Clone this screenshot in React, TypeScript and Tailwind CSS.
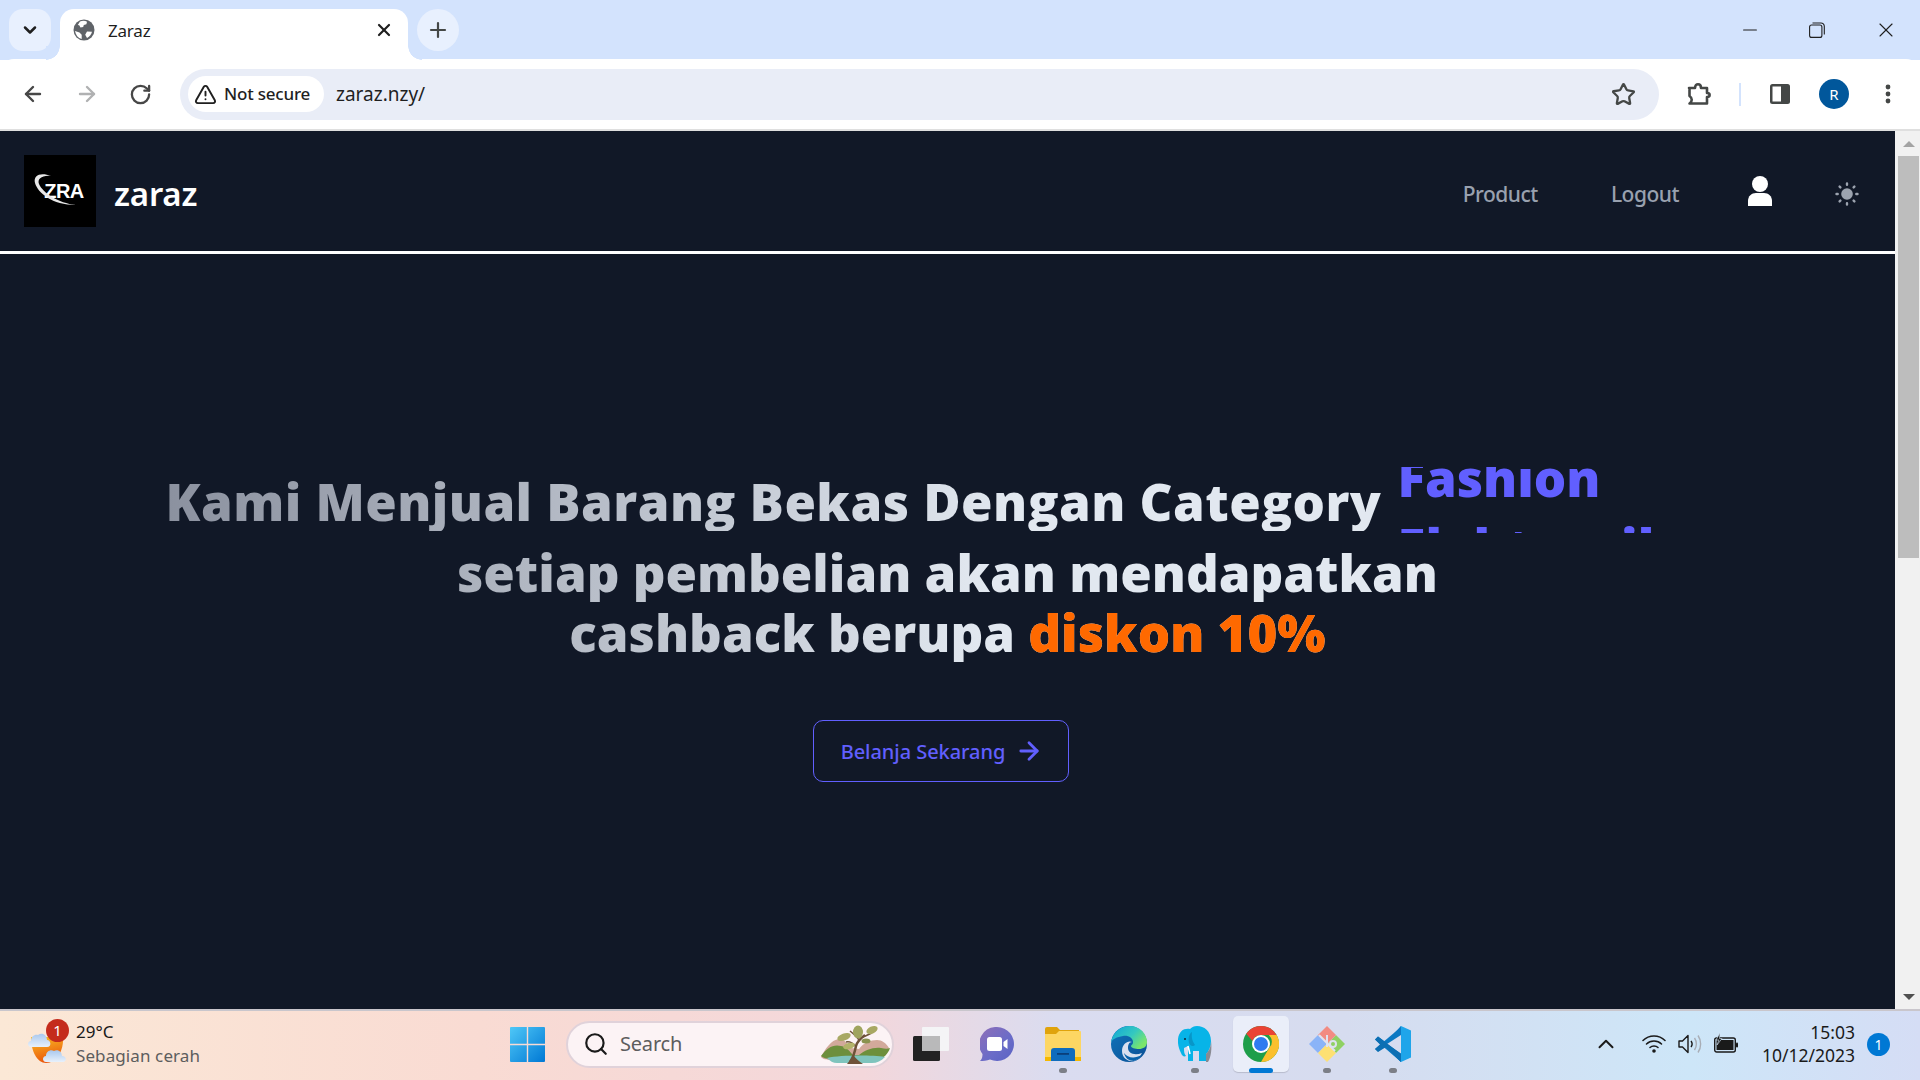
import React from 'react';
import { ArrowLeft, ArrowRight, ChevronDown, ChevronUp, Minus, Plus, RotateCw, Search, Star, TriangleAlert, X } from 'lucide-react';

const UI_FONT = "font-['Noto_Sans','Open_Sans',sans-serif]";

const GlobeIcon = () => (
  <svg width="22" height="22" viewBox="0 0 22 22">
    <circle cx="11" cy="11" r="10.5" fill="#5f6368" />
    <path d="M7 2.500c2-.8 5-1 7 .2l-.6 2.600-2.600.6-.6 2.200-2.700.4-1.300-2.200L4.800 6z" fill="#fff" />
    <path d="M2 12l4.500 1.400 2.200 2.400v4.300C5 19 2.700 16 2 12zM14 12.500l5 .2c-.5 2.400-2.200 5-5 6.200l-1.800-3.200z" fill="#fff" />
  </svg>
);

const PuzzleIcon = () => (
  <svg width="26" height="26" viewBox="0 0 26 26" fill="none" stroke="#444746" strokeWidth="2.6" strokeLinejoin="round">
    <path d="M3 7h6c0-5 6-5 6 0h6v5c3.500 0 3.500 4 0 4v6.500H3.500c3-2 3-5.500 0-7.500V7z" />
  </svg>
);

const SidePanelIcon = () => (
  <svg width="22" height="22" viewBox="0 0 22 22">
    <rect x="1" y="1" width="20" height="20" rx="2.500" fill="#444746" />
    <rect x="3.500" y="3.500" width="8.500" height="15" fill="#fff" />
  </svg>
);

const RestoreIcon = () => (
  <svg width="16" height="16" viewBox="0 0 16 16" fill="none" stroke="#1f1f1f" strokeWidth="1.100">
    <rect x="0.600" y="3" width="12.300" height="12.400" rx="2" />
    <path d="M3.500 1h8.500a3.300 3.300 0 0 1 3.300 3.300v8.200" />
  </svg>
);

const DotsIcon = () => (
  <svg width="6" height="24" viewBox="0 0 6 24" fill="#444746">
    <circle cx="3" cy="5" r="2.400" />
    <circle cx="3" cy="12" r="2.400" />
    <circle cx="3" cy="19" r="2.400" />
  </svg>
);

const LogoMark = () => (
  <div className="relative flex h-[72px] w-[72px] items-center justify-center bg-black pl-[8px]">
    <span className="font-['Liberation_Sans',sans-serif] text-[20px] font-bold tracking-[-0.5px] text-white">ZRA</span>
    <svg className="absolute left-0 top-0" width="72" height="72" viewBox="0 0 72 72">
      <path d="M27 21C17 17 9 20 11 28c3 10 17 22 41 22-18-2-33-12-37-21-2-5 3-9 12-8z" fill="#e8e8e8" />
    </svg>
  </div>
);

const UserIcon = () => (
  <svg width="24" height="30" viewBox="0 0 24 30" fill="#fff">
    <circle cx="12" cy="8" r="8" />
    <path d="M0 30v-5c0-5 3.500-8 8-8h8c4.500 0 8 3 8 8v5z" />
  </svg>
);

const SunIcon = () => (
  <svg width="24" height="24" viewBox="0 0 24 24" fill="#9ca3af" stroke="#9ca3af" strokeLinecap="round">
    <circle cx="12" cy="12" r="5.800" stroke="none" />
    <path strokeWidth="2.400" d="M12 1.500v1.200M12 21.300v1.200M1.500 12h1.200M21.300 12h1.200M4.600 4.600l.8.800M18.600 18.600l.8.800M4.600 19.400l.8-.8M18.600 5.400l.8-.8" />
  </svg>
);

const WeatherIcon = () => (
  <svg width="40" height="42" viewBox="0 0 40 42">
    <defs>
      <linearGradient id="wsun" x1="0" y1="0" x2="0.300" y2="1">
        <stop offset="0" stopColor="#fbbf24" />
        <stop offset="1" stopColor="#ea580c" />
      </linearGradient>
      <linearGradient id="wcloud" x1="0" y1="0" x2="0" y2="1">
        <stop offset="0" stopColor="#a9c8ee" />
        <stop offset="1" stopColor="#e8f1fb" />
      </linearGradient>
    </defs>
    <path d="M4 14h32c1 14-7 26-17 26C10 40 4 28 4 14z" fill="url(#wsun)" />
    <path d="M4 24c-4 0-4-6 0-6 0-5 4-7 7-6 4-3 9 0 9 5 4 0 5 7 0 7z" fill="url(#wcloud)" />
    <path d="M19 39c-4 0-4-6 0-6 0-5 5-7 8-5 4-2 8 1 8 5 5 0 5 6 1 6z" fill="url(#wcloud)" />
  </svg>
);

const WindowsLogo = () => (
  <svg width="35" height="35" viewBox="0 0 35 35">
    <defs>
      <linearGradient id="win" x1="0" y1="0" x2="1" y2="1">
        <stop offset="0" stopColor="#4fc8f7" />
        <stop offset="1" stopColor="#0078d4" />
      </linearGradient>
    </defs>
    <path d="M1 0h15.800v16.800H0V1a1 1 0 0 1 1-1zM18.200 0H34a1 1 0 0 1 1 1v15.800H18.200zM0 18.200h16.800V35H1a1 1 0 0 1-1-1zM18.200 18.200H35V34a1 1 0 0 1-1 1H18.200z" fill="url(#win)" />
  </svg>
);

const SearchArt = () => (
  <svg width="72" height="42" viewBox="0 0 72 42">
    <path d="M2 34c4-8 10-17 18-18 6 0 8 5 12 9l8 1c4-6 12-9 18-9 5 0 9 3 12 8-3 8-8 12-14 12H14C9 37 5 37 2 34z" fill="#d2a99b" />
    <path d="M2 33c6-8 12-12 20-10 6 1 9 6 12 9h6c6-5 14-8 22-7 4 1 7 1 9 0-2 6-6 10-12 11H12c-4 0-8-1-10-3z" fill="#6d8f3c" />
    <path d="M8 35c14-3 44-3 58-1-4 4-8 6-13 6H18c-4 0-7-2-10-5z" fill="#7fc4bd" />
    <path d="M31 39c3-4 5-11 6-16 1-4 5-8 9-11" stroke="#6e5239" strokeWidth="2.500" fill="none" />
    <path d="M28 41c2-3 4-5 7-8 2 3 5 5 9 8z" fill="#6e5239" />
    <path d="M37 24c-2-3-6-6-10-5M40 17c-2-3-4-5-9-9M44 14c3-1 6-3 9-4" stroke="#6e5239" strokeWidth="1.500" fill="none" />
    <ellipse cx="25" cy="14" rx="7" ry="3.500" fill="#a8a863" transform="rotate(-20 25 14)" />
    <ellipse cx="30" cy="23" rx="6" ry="3" fill="#b3b36b" transform="rotate(-15 30 23)" />
    <ellipse cx="39" cy="9" rx="5" ry="6.500" fill="#9fa45e" />
    <ellipse cx="53" cy="7" rx="6" ry="3.500" fill="#a8a863" transform="rotate(-25 53 7)" />
    <ellipse cx="47" cy="18" rx="4.500" ry="2.500" fill="#8a9350" />
  </svg>
);

const TaskViewIcon = () => (
  <svg width="36" height="34" viewBox="0 0 36 34">
    <rect x="0" y="9" width="27" height="25" rx="1.500" fill="#222" />
    <rect x="9" y="0" width="27" height="24" rx="1" fill="#f4f4f6" />
    <rect x="9" y="9" width="18" height="15" fill="#b9b9ba" />
  </svg>
);

const MeetIcon = () => (
  <svg width="34" height="34" viewBox="0 0 34 34">
    <defs>
      <linearGradient id="meet" x1="0" y1="0" x2="1" y2="1">
        <stop offset="0" stopColor="#8f6fb8" />
        <stop offset="0.600" stopColor="#6a6cc8" />
        <stop offset="1" stopColor="#5a62c4" />
      </linearGradient>
    </defs>
    <path d="M17 0a17 17 0 1 1-7 32.500C7 34 3 34 0 34c2-2 2.500-4 2.500-7A17 17 0 0 1 17 0z" fill="url(#meet)" />
    <rect x="7" y="10" width="15" height="14" rx="2.500" fill="#fff" />
    <path d="M23.500 15l4-3v10l-4-3z" fill="#fff" />
  </svg>
);

const ExplorerIcon = () => (
  <svg width="36" height="34" viewBox="0 0 36 34">
    <path d="M0 2a2 2 0 0 1 2-2h10l3 3h19v8H0z" fill="#e0a30c" />
    <rect x="0" y="4" width="36" height="30" rx="1" fill="#fdd663" />
    <path d="M0 4h14l-3 3H0z" fill="#e0a30c" />
    <path d="M6 34V24a3 3 0 0 1 3-3h18a3 3 0 0 1 3 3v10z" fill="#0f6cbd" />
    <rect x="12" y="26" width="12" height="1.800" fill="#0a3f7a" />
    <rect x="30" y="30" width="6" height="4" fill="#f5b800" />
    <rect x="0" y="30" width="6" height="4" fill="#f5b800" />
  </svg>
);

const EdgeIcon = () => (
  <svg width="36" height="36" viewBox="0 0 36 36">
    <defs>
      <linearGradient id="edge1" x1="0" y1="0" x2="1" y2="0.600">
        <stop offset="0" stopColor="#0fa4d8" />
        <stop offset="0.600" stopColor="#34c8c0" />
        <stop offset="1" stopColor="#7be66a" />
      </linearGradient>
      <linearGradient id="edge2" x1="0" y1="0" x2="1" y2="1">
        <stop offset="0" stopColor="#0f75bc" />
        <stop offset="1" stopColor="#0c4f94" />
      </linearGradient>
    </defs>
    <circle cx="18" cy="18" r="18" fill="url(#edge2)" />
    <path d="M0 17C1 7 9 0 19 0c10 0 17 8 17 16 0 5-4 7-8 7-4 0-8-1-8-3 0-1 2-1 2-4 0-4-5-7-10-6C6 11 1 13 0 17z" fill="url(#edge1)" />
    <path d="M23 35c-6 1-12-3-12-10 0-7 6-11 10-9-3 0-4 3-4 6 0 5 6 8 14 5-2 4-5 7-8 8z" fill="#d8e0ef" />
    <path d="M23 35c-5 0-9-3-10-8 4 5 10 6 18 2-2 3-5 5-8 6z" fill="#0a63ab" />
  </svg>
);

const ElephantIcon = () => (
  <svg width="34" height="36" viewBox="0 0 34 36">
    <path d="M33 15C33 5 26 0 19 0c-3 0-5 1-7 3C6 2 1 5 0 13c-.5 5 1 10 3 14 1 3 3 4 5 3-2-2-2-5-2-8l4-2v15h5V25h6v10h7V28c3-3 5-8 5-13z" fill="#07b4e8" />
    <path d="M33 15c0 6-2 10-5 13v8h2c3-5 4-13 3-21z" fill="#555" opacity="0.600" />
    <path d="M14 6c-3 2-4 6-3 11 1 3 4 4 6 2-2-3-4-7-3-13z" fill="#0896c8" />
    <circle cx="7" cy="13" r="1" fill="#123" />
    <path d="M10 20l2 8" stroke="#fff" strokeWidth="1.500" />
  </svg>
);

const ChromeIcon = () => (
  <svg width="36" height="36" viewBox="0 0 36 36">
    <circle cx="18" cy="18" r="18" fill="#1e9e4a" />
    <path d="M18 0a18 18 0 0 1 15.600 9H18a9 9 0 0 0-8.500 6L3.200 7.700A18 18 0 0 1 18 0z" fill="#ea4335" />
    <path d="M33.600 9A18 18 0 0 1 18 36l7.800-13.500a9 9 0 0 0 0-13.500z" fill="#fbc02d" />
    <circle cx="18" cy="18" r="9" fill="#fff" />
    <circle cx="18" cy="18" r="7" fill="#2f7bf0" />
  </svg>
);

const GitIcon = () => (
  <svg width="36" height="36" viewBox="0 0 36 36">
    <path d="M18 18L9 9l-9 9 9 9z" fill="#8ab4f8" />
    <path d="M18 18l9-9 9 9-9 9z" fill="#8fd163" />
    <path d="M18 18l-9 9 9 9 9-9z" fill="#fde073" />
    <path d="M18 18l-9-9 9-9 9 9z" fill="#f28b82" />
    <path d="M10 9l16 16M18 9v12" stroke="#dfe2f0" strokeWidth="2" />
    <circle cx="24" cy="18" r="3" fill="none" stroke="#dfe2f0" strokeWidth="2" />
  </svg>
);

const VsCodeIcon = () => (
  <svg width="36" height="36" viewBox="0 0 36 36">
    <path d="M26 0l10 4.500v27L26 36 10 20.500 26 0z" fill="#1fa5ea" />
    <path d="M26 0v36L0 13.500 3 10.500l8 6L26 0z" fill="#0b78c2" />
    <path d="M0 23l3 2.500L26 9V1z" fill="#0b78c2" />
    <path d="M26 9L12 18l14 9.500z" fill="#d6dcf0" />
    <path d="M0 13.500l3-3 23 17.500v8L11 21 3 26l-3-3 5-4.500z" fill="#0c6fb3" />
  </svg>
);

const WifiIcon = () => (
  <svg width="24" height="20" viewBox="0 0 24 20" fill="none" stroke="#1a1a1a" strokeWidth="1.500" strokeLinecap="round">
    <path d="M1 6.500c6-6 16-6 22 0M4.500 10c4-4 11-4 15 0M8 13.500c2-2 6-2 8 0" />
    <circle cx="12" cy="17" r="1.800" fill="#1a1a1a" stroke="none" />
  </svg>
);

const SpeakerIcon = () => (
  <svg width="24" height="22" viewBox="0 0 24 22" fill="none" strokeWidth="1.400" strokeLinejoin="round">
    <path d="M1 8h3.500L10 2.500v17L4.500 14H1z" stroke="#1a1a1a" />
    <path d="M13 8c1.500 2 1.500 4 0 6" stroke="#1a1a1a" />
    <path d="M16.500 5c2.500 3.500 2.500 8.500 0 12M20 2.500c3.500 5 3.500 12 0 17" stroke="#a8adb5" />
  </svg>
);

const BatteryIcon = () => (
  <svg width="24" height="22" viewBox="0 0 24 22">
    <rect x="0.700" y="5" width="20.600" height="14" rx="2" fill="none" stroke="#1a1a1a" strokeWidth="1.400" />
    <rect x="2.500" y="7" width="17" height="10" fill="#1a1a1a" />
    <rect x="22" y="9.500" width="2" height="5" rx="1" fill="#1a1a1a" />
    <path d="M6 0L2 7h3L3 12l5-6.500H5.500z" fill="#1a1a1a" stroke="#d5e6f7" strokeWidth="0.600" />
  </svg>
);

const TaskIcon = ({ children, dot }: { children: React.ReactNode; dot?: boolean }) => (
  <div className="relative flex h-[56px] w-[56px] items-center justify-center">
    {children}
    {dot && <span className="absolute bottom-[-1px] left-1/2 h-[5px] w-[8px] -translate-x-1/2 rounded-full bg-[#7c7f87]" />}
  </div>
);

function TabStrip() {
  return (
    <div className="flex h-[60px] shrink-0 items-start bg-[#d3e3fd] pl-[9px] pt-[9px]">
      <div className="flex h-[42px] w-[42px] items-center justify-center rounded-[14px] bg-[#e8f0fe]">
        <ChevronDown className="h-[20px] w-[20px] text-[#1f1f1f]" strokeWidth={3} />
      </div>
      <div className="relative ml-[9px] flex h-[51px] w-[348px] items-center rounded-t-[14px] bg-white pb-[9px] pl-[13px] pr-[14px]">
        <span className="absolute bottom-0 left-[-14px] h-[14px] w-[14px] bg-[radial-gradient(circle_at_0_0,#d3e3fd_13.500px,#ffffff_14px)]" />
        <span className="absolute bottom-0 right-[-14px] h-[14px] w-[14px] bg-[radial-gradient(circle_at_100%_0,#d3e3fd_13.500px,#ffffff_14px)]" />
        <GlobeIcon />
        <span className="ml-[13px] mt-[1px] text-[17px] tracking-[-0.2px] text-[#1f1f1f]">Zaraz</span>
        <X className="ml-auto h-[20px] w-[20px] text-[#1f1f1f]" strokeWidth={2.6} />
      </div>
      <div className="ml-[9px] flex h-[42px] w-[42px] items-center justify-center rounded-full bg-[#e8f0fe]">
        <Plus className="h-[24px] w-[24px] text-[#444746]" strokeWidth={2.2} />
      </div>
      <div className="ml-auto flex h-[42px] items-center">
        <div className="flex w-[68px] justify-center">
          <Minus className="h-[22px] w-[22px] text-[#1f1f1f]" strokeWidth={1.1} />
        </div>
        <div className="flex w-[68px] justify-center pr-[2px]">
          <RestoreIcon />
        </div>
        <div className="flex w-[68px] justify-center">
          <X className="h-[24px] w-[24px] text-[#1f1f1f]" strokeWidth={1.1} />
        </div>
      </div>
    </div>
  );
}

function Toolbar() {
  return (
    <div className="-mt-px flex h-[70px] shrink-0 items-center rounded-t-[14px] bg-white">
      <ArrowLeft className="ml-[21px] h-[24px] w-[24px] text-[#474747]" strokeWidth={2.4} />
      <ArrowRight className="ml-[30px] h-[24px] w-[24px] text-[#b0b1b2]" strokeWidth={2.4} />
      <RotateCw className="ml-[30px] h-[23px] w-[23px] text-[#474747]" strokeWidth={2.4} />
      <div className="ml-[28px] flex h-[51px] w-[1479px] items-center rounded-full bg-[#e9edf7] pl-[8px] pr-[23px]">
        <div className="flex h-[36px] w-[136px] items-center rounded-full bg-white pl-[6px]">
          <TriangleAlert className="h-[23px] w-[23px] text-[#1f1f1f]" strokeWidth={2} />
          <span className="ml-[7px] text-[17px] font-medium tracking-[-0.2px] text-[#1f1f1f]">Not secure</span>
        </div>
        <span className="ml-[12px] text-[19px] text-[#1f1f1f]">zaraz.nzy/</span>
        <Star className="ml-auto h-[25px] w-[25px] text-[#444746]" strokeWidth={2.2} />
      </div>
      <div className="ml-[27px]">
        <PuzzleIcon />
      </div>
      <span className="ml-[27px] h-[23px] w-[2px] bg-[#d3e3fd]" />
      <div className="ml-[28px]">
        <SidePanelIcon />
      </div>
      <div className="ml-[28px] flex h-[30px] w-[30px] items-center justify-center rounded-full bg-[#01579b] text-[15px] text-white">R</div>
      <div className="ml-[36px]">
        <DotsIcon />
      </div>
    </div>
  );
}

function SiteNav() {
  return (
    <nav className="flex h-[123px] shrink-0 items-center border-b-[3px] border-white pl-[24px]">
      <LogoMark />
      <span className="ml-[18px] mt-[6px] text-[33px] font-semibold tracking-[-0.2px] text-white">zaraz</span>
      <div className="ml-auto flex items-center text-[21px] font-medium tracking-[-0.5px] text-gray-400">
        <span className="mt-[7px]">Product</span>
        <span className="ml-[73px] mt-[7px]">Logout</span>
        <span className="ml-[69px]">
          <UserIcon />
        </span>
        <span className="ml-[63px] mr-[36px] mt-[6px]">
          <SunIcon />
        </span>
      </div>
    </nav>
  );
}

function Hero() {
  return (
    <section className="flex-1 pt-[213px] text-center font-['Open_Sans',sans-serif] text-[51px] font-extrabold leading-[60px]">
      <div className="flex h-[66px] justify-center">
        <span className="mt-[4px] h-[60px] whitespace-nowrap bg-[linear-gradient(90deg,#8b919f_0%,#e2e8f0_70%)] bg-clip-text tracking-[0.45px] text-transparent">
          Kami Menjual Barang Bekas Dengan Category
        </span>
        <div className="ml-[16px] h-[66px] w-[332px] overflow-hidden text-left leading-[69px] text-indigo-500">
          <div className="-mt-[24px]">Fashion</div>
          <div>Elektronik</div>
        </div>
      </div>
      <div className="mt-[9px] bg-[linear-gradient(90deg,#7a808e_0%,#e2e8f0_52%)] bg-clip-text text-transparent">
        setiap pembelian akan mendapatkan
      </div>
      <div className="bg-[linear-gradient(90deg,#7a808e_0%,#e2e8f0_52%)] bg-clip-text text-transparent">
        cashback berupa <span className="text-orange-500">diskon 10%</span>
      </div>
      <button className={`mr-[14px] mt-[58px] inline-flex h-[62px] w-[256px] items-center justify-center rounded-[10px] border border-indigo-500 pl-[3px] text-[20px] font-medium leading-none tracking-[-0.05px] text-indigo-500 ${UI_FONT}`}>
        <span className="mt-[1px]">Belanja Sekarang</span>
        <ArrowRight className="ml-[10px] h-[28px] w-[28px]" strokeWidth={2.4} />
      </button>
    </section>
  );
}

function PageScrollbar() {
  return (
    <div className="flex w-[25px] shrink-0 flex-col items-center bg-[#f1f1f1] pl-[2px]">
      <div className="flex h-[25px] items-center justify-center">
        <span className="h-0 w-0 border-x-[6px] border-b-[6px] border-x-transparent border-b-[#a3a3a3]" />
      </div>
      <div className="h-[402px] w-[21px] bg-[#bdbdbd]" />
      <div className="mt-auto flex h-[25px] items-center justify-center">
        <span className="h-0 w-0 border-x-[6px] border-t-[6px] border-x-transparent border-t-[#505050]" />
      </div>
    </div>
  );
}

function Taskbar() {
  return (
    <div className="flex h-[71px] shrink-0 items-center border-t-[2px] border-[#c9c6cc] bg-[linear-gradient(90deg,#fbe8d6_0%,#f9dbd3_25%,#f3d7db_45%,#dadcf0_55%,#d6dcef_70%,#cde6f8_88%,#d5ddf5_100%)] pb-[3px]">
      <div className="flex h-full w-[510px] shrink-0 items-center pl-[27px]">
        <div className="relative">
          <WeatherIcon />
          <span className="absolute left-[19px] top-[-4px] flex h-[23px] w-[23px] items-center justify-center rounded-full bg-[#c42b1c] text-[15px] text-white">1</span>
        </div>
        <div className="ml-[9px] flex flex-col text-[17px] leading-[24px]">
          <span className="text-[#1a1a1a]">29°C</span>
          <span className="tracking-[0.1px] text-[#5d5d5d]">Sebagian cerah</span>
        </div>
      </div>
      <WindowsLogo />
      <div className="ml-[21px] flex h-[47px] w-[328px] items-center rounded-full border-[2px] border-[#e0d2da] bg-[#fcf3f5] pl-[15px] pr-[1px]">
        <Search className="h-[26px] w-[26px] text-[#1a1a1a]" strokeWidth={2} />
        <span className="ml-[11px] text-[20px] tracking-[-0.2px] text-[#5d5d5d]">Search</span>
        <div className="ml-auto">
          <SearchArt />
        </div>
      </div>
      <div className="ml-[9px] flex items-center gap-[10px]">
        <TaskIcon><TaskViewIcon /></TaskIcon>
        <TaskIcon><MeetIcon /></TaskIcon>
        <TaskIcon dot><ExplorerIcon /></TaskIcon>
        <TaskIcon><EdgeIcon /></TaskIcon>
        <TaskIcon dot><ElephantIcon /></TaskIcon>
        <div className="relative flex h-[56px] w-[56px] items-center justify-center rounded-[5px] bg-[#eaeef9] shadow-[0_1px_1px_rgba(0,0,0,0.15)]">
          <ChromeIcon />
          <span className="absolute bottom-[-1px] left-1/2 h-[5px] w-[24px] -translate-x-1/2 rounded-full bg-[#0078d4]" />
        </div>
        <TaskIcon dot><GitIcon /></TaskIcon>
        <TaskIcon dot><VsCodeIcon /></TaskIcon>
      </div>
      <div className="ml-auto flex items-center pr-[30px]">
        <ChevronUp className="h-[26px] w-[26px] text-[#1a1a1a]" strokeWidth={1.8} />
        <div className="ml-[23px] flex items-center gap-[12px]">
          <WifiIcon />
          <SpeakerIcon />
          <BatteryIcon />
        </div>
        <div className="ml-[24px] flex flex-col items-end text-[17.500px] leading-[23px] text-[#1a1a1a]">
          <span>15:03</span>
          <span>10/12/2023</span>
        </div>
        <span className="ml-[12px] flex h-[23px] w-[23px] items-center justify-center rounded-full bg-[#0078d4] text-[14px] text-white">1</span>
      </div>
    </div>
  );
}

export default function App() {
  return (
    <div className={`flex h-[1080px] w-[1920px] flex-col overflow-hidden ${UI_FONT}`}>
      <TabStrip />
      <Toolbar />
      <div className="h-[2px] shrink-0 bg-[#dfdfdf]" />
      <div className="flex min-h-0 flex-1">
        <main className="flex min-w-0 flex-1 flex-col bg-[#111827]">
          <SiteNav />
          <Hero />
        </main>
        <PageScrollbar />
      </div>
      <Taskbar />
    </div>
  );
}
